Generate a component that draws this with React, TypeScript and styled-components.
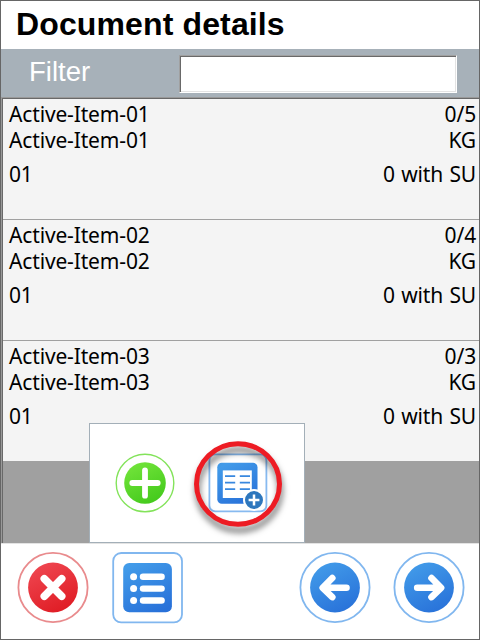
import React from "react";
import styled, { createGlobalStyle } from "styled-components";

const GlobalStyle = createGlobalStyle`
  * { box-sizing: border-box; }
  body { margin: 0; background: #fff; overflow: hidden; }
  svg { display: block; overflow: visible; }
`;

const Screen = styled.main`
  display: flex;
  flex-direction: column;
  width: 480px;
  height: 640px;
  border: 1px solid #666;
  background: #fff;
  color: #000;
`;

const Title = styled.h1`
  margin: 0;
  height: 48px;
  padding-left: 15px;
  font: bold 32px/46px "Liberation Sans", Arial, sans-serif;
  letter-spacing: 0.13px;
  white-space: nowrap;
`;

const FilterBar = styled.label`
  display: flex;
  align-items: flex-start;
  height: 48px;
  background: #a7b1b9;
`;

const FilterLabel = styled.span`
  width: 178px;
  padding-left: 28px;
  color: #fff;
  font: 27.5px/46px "Liberation Sans", Arial, sans-serif;
`;

const FilterInput = styled.input`
  width: 278px;
  height: 38px;
  margin: 6px 0 0;
  padding: 0 6px;
  border: 1px solid;
  border-color: #a0a0a0 #fff #fff #a0a0a0;
  border-radius: 0;
  outline: none;
  background: #fff;
  box-shadow: inset 1px 1px #696969, inset -1px -1px #e3e3e3;
  font: 24px "Liberation Sans", Arial, sans-serif;
`;

const ListArea = styled.section`
  position: relative;
  flex: 1;
  border: solid;
  border-width: 1px 0 0 1px;
  border-color: #999;
  box-shadow: inset 1px 1px #696969;
  padding: 1px 0 0 1px;
  background: #a0a0a0;
  background-clip: padding-box;
`;

const List = styled.ul`
  margin: 0;
  padding: 0;
  list-style: none;
`;

const Item = styled.li<{ $last: boolean }>`
  height: ${(p) => (p.$last ? 120 : 121)}px;
  padding: 2px 3px 0 6px;
  border-bottom: ${(p) => (p.$last ? "0" : "1px solid #a0a0a0")};
  background: #f4f4f4;
`;

const Line = styled.div<{ $gap?: boolean }>`
  display: flex;
  justify-content: space-between;
  margin-top: ${(p) => (p.$gap ? 8 : 0)}px;
  font: 21px/26px "Noto Sans", Tahoma, sans-serif;
  letter-spacing: -0.15px;
  word-spacing: 1px;
`;

const Popup = styled.div`
  position: absolute;
  left: 87px;
  bottom: 0;
  display: flex;
  align-items: center;
  gap: 33px;
  width: 216px;
  height: 120px;
  padding-left: 25px;
  border: 1px solid #a3afb8;
  background: #fff;
`;

const IconButton = styled.button<{ $size: number }>`
  position: relative;
  flex: none;
  width: ${(p) => p.$size}px;
  height: ${(p) => p.$size}px;
  padding: 0;
  border: 0;
  background: none;
`;

const Highlight = styled.svg`
  position: absolute;
  left: -20px;
  top: -18px;
  filter: drop-shadow(1px 6px 3px rgba(0, 0, 0, 0.55));
`;

const Toolbar = styled.footer`
  display: flex;
  justify-content: space-between;
  height: 96px;
  padding: 8px 14px 0 16px;
  border-top: 1px solid #e3e3e3;
`;

const Group = styled.div<{ $gap: number }>`
  display: flex;
  gap: ${(p) => p.$gap}px;
`;

const Gradient = ({ id, from, to }: { id: string; from: string; to: string }) => (
  <linearGradient id={id} x1="0.25" y1="0" x2="0.75" y2="1">
    <stop offset="0" stopColor={from} />
    <stop offset="1" stopColor={to} />
  </linearGradient>
);

const AddIcon = () => (
  <svg width="60" height="60" viewBox="0 0 60 60">
    <defs><Gradient id="green" from="#72e43a" to="#42c91b" /></defs>
    <circle cx="30" cy="30" r="28.8" fill="#fff" stroke="#83e35a" strokeWidth="1.4" />
    <circle cx="30" cy="30" r="20.8" fill="url(#green)" />
    <path d="M30 17.3v25.4M17.3 30h25.4" stroke="#fff" strokeWidth="5.8" strokeLinecap="round" />
  </svg>
);

const TableAddIcon = () => (
  <svg width="60" height="60" viewBox="0 0 60 60">
    <defs><Gradient id="table" from="#429be9" to="#2871d9" /></defs>
    <rect x="1.4" y="1.4" width="57" height="57" rx="6" fill="#fff" stroke="#87baf0" strokeWidth="1.8" />
    <rect x="9.3" y="9.8" width="40.2" height="41" rx="4.5" fill="url(#table)" />
    <rect x="14.8" y="17.4" width="29" height="27.6" fill="#fff" />
    <path d="M17 23.2h10.2M17 29.7h10.2M17 36.2h10.2M31.8 23.2H42M31.8 29.7H42M31.8 36.2H42" stroke="#3988df" strokeWidth="1.8" />
    <circle cx="46" cy="47" r="10" fill="#2e77bd" stroke="#fff" strokeWidth="2" />
    <path d="M46 41.6v10.8M40.6 47h10.8" stroke="#fff" strokeWidth="2.5" />
  </svg>
);

const CancelIcon = () => (
  <svg width="72" height="72" viewBox="0 0 72 72">
    <defs><Gradient id="red" from="#ef4650" to="#df1b23" /></defs>
    <circle cx="36" cy="35.5" r="34.6" fill="#fff" stroke="#e98b8d" strokeWidth="1.8" />
    <circle cx="36" cy="35.5" r="24.9" fill="url(#red)" />
    <path d="M27.3 26.8l17.4 17.4M44.7 26.8L27.3 44.2" stroke="#fff" strokeWidth="7.6" strokeLinecap="round" />
  </svg>
);

const ListIcon = () => (
  <svg width="72" height="72" viewBox="0 0 72 72">
    <defs><Gradient id="list" from="#429be9" to="#2871d9" /></defs>
    <rect x="1.2" y="1" width="68.8" height="69.4" rx="8" fill="#fff" stroke="#81b7ef" strokeWidth="1.8" />
    <rect x="11.2" y="11" width="48.7" height="49.2" rx="6" fill="url(#list)" />
    {[24.8, 36.6, 48.5].map((y) => (
      <g key={y} fill="#fff">
        <circle cx="21.6" cy={y} r="3.5" />
        <rect x="27.8" y={y - 3.2} width="25" height="6.4" rx="3.2" />
      </g>
    ))}
  </svg>
);

const ArrowIcon = ({ direction }: { direction: "left" | "right" }) => {
  const id = `arrow-${direction}`;
  return (
    <svg width="72" height="72" viewBox="0 0 72 72">
      <defs><Gradient id={id} from="#429be9" to="#2871d9" /></defs>
      <circle cx="36" cy="35.5" r="34.6" fill="#fff" stroke="#81b7ef" strokeWidth="1.8" />
      <circle cx="36" cy="35.5" r="24.9" fill={`url(#${id})`} />
      <path
        d={direction === "left" ? "M47.5 35.8H25.5M33.3 26L23.7 35.8L33.3 45.1" : "M24.2 35.8H46.5M38.5 26L48.1 35.8L38.5 45.1"}
        fill="none"
        stroke="#fff"
        strokeWidth="6.6"
        strokeLinecap="round"
        strokeLinejoin="round"
      />
    </svg>
  );
};

const items = [
  { name: "Active-Item-01", quantity: "0/5" },
  { name: "Active-Item-02", quantity: "0/4" },
  { name: "Active-Item-03", quantity: "0/3" },
];

export default function App() {
  return (
    <>
      <GlobalStyle />
      <Screen>
        <Title>Document details</Title>
        <FilterBar>
          <FilterLabel>Filter</FilterLabel>
          <FilterInput />
        </FilterBar>
        <ListArea>
          <List>
            {items.map((item, i) => (
              <Item key={item.name} $last={i === items.length - 1}>
                <Line><span>{item.name}</span><span>{item.quantity}</span></Line>
                <Line><span>{item.name}</span><span>KG</span></Line>
                <Line $gap><span>01</span><span>0 with SU</span></Line>
              </Item>
            ))}
          </List>
          <Popup>
            <IconButton $size={60} aria-label="Add"><AddIcon /></IconButton>
            <IconButton $size={60} aria-label="Add from list">
              <TableAddIcon />
              <Highlight width="100" height="100" viewBox="0 0 100 100">
                <ellipse cx="50" cy="49" rx="41.5" ry="40.3" fill="none" stroke="#ed1c24" strokeWidth="5" />
              </Highlight>
            </IconButton>
          </Popup>
        </ListArea>
        <Toolbar>
          <Group $gap={23}>
            <IconButton $size={72} aria-label="Cancel"><CancelIcon /></IconButton>
            <IconButton $size={72} aria-label="List"><ListIcon /></IconButton>
          </Group>
          <Group $gap={22}>
            <IconButton $size={72} aria-label="Previous"><ArrowIcon direction="left" /></IconButton>
            <IconButton $size={72} aria-label="Next"><ArrowIcon direction="right" /></IconButton>
          </Group>
        </Toolbar>
      </Screen>
    </>
  );
}
